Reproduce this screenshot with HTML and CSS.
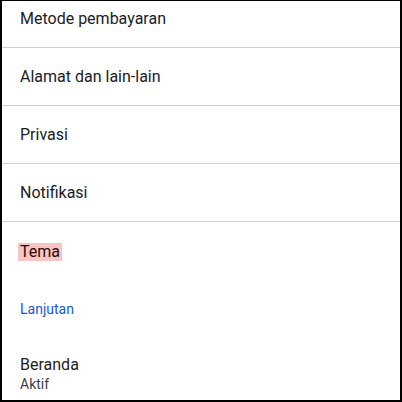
FILE: index.html
```html
<!DOCTYPE html>
<html lang="id">
<head>
<meta charset="utf-8">
<link rel="stylesheet" href="styles.css">
</head>
<body>
<div class="frame">
  <div class="list">
    <div class="row">Metode pembayaran</div>
    <div class="row">Alamat dan lain-lain</div>
    <div class="row">Privasi</div>
    <div class="row">Notifikasi</div>
    <div class="row row-last"><span class="hl">Tema</span></div>
    <div class="section">Lanjutan</div>
    <div class="item2">
      <div class="title">Beranda</div>
      <div class="sub">Aktif</div>
    </div>
  </div>
</div>
</body>
</html>
```

FILE: styles.css
```css
html, body {
  margin: 0;
  padding: 0;
  background: #fff;
}
.frame {
  box-sizing: border-box;
  width: 402px;
  height: 402px;
  border-top: 1px solid #000;
  border-left: 2px solid #000;
  border-right: 2px solid #000;
  border-bottom: 2px solid #000;
  overflow: hidden;
  font-family: Roboto, "Noto Sans", sans-serif;
  color: #202124;
}
.list {
  margin-top: -11px;
}
.row {
  height: 57px;
  display: flex;
  align-items: center;
  padding-left: 18px;
  font-size: 16px;
  border-bottom: 1px solid #d0d0d0;
}
.row-last {
  border-bottom: none;
  height: 60px;
}
.hl {
  background: #f8c4c4;
  color: #2a0a0a;
  padding: 0 2px;
  margin-left: -2px;
  line-height: 18px;
}
.section {
  height: 54px;
  display: flex;
  align-items: center;
  padding-left: 18px;
  font-size: 14px;
  color: #1558d6;
}
.item2 {
  padding: 19px 0 0 18px;
}
.title {
  font-size: 16px;
  line-height: 20px;
}
.sub {
  font-size: 14px;
  line-height: 18px;
  color: #3c4043;
}
```
